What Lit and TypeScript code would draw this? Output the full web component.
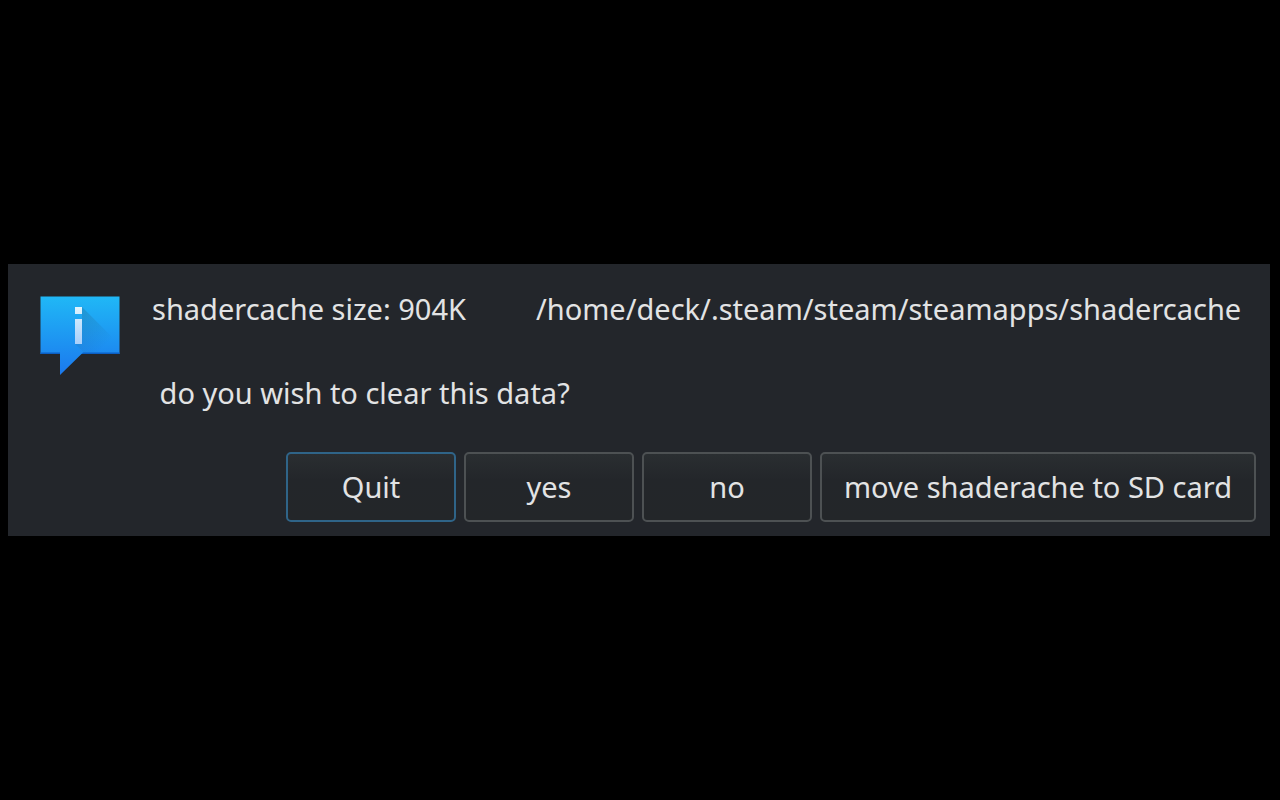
import { LitElement, html, css } from "lit";
import { customElement, property, state } from "lit/decorators.js";

@customElement("info-icon")
class InfoIcon extends LitElement {
  static styles = css`
    :host {
      display: block;
      flex: none;
      width: 80px;
      height: 80px;
    }
    .icon {
      display: block;
      width: 100%;
      height: 100%;
    }
  `;

  render() {
    return html`
      <svg class="icon" viewBox="0 0 80 80" role="img" aria-label="Information">
        <defs>
          <linearGradient id="bubble" x1="0" y1="0" x2="0" y2="80" gradientUnits="userSpaceOnUse">
            <stop offset="0" stop-color="#20b8f6" />
            <stop offset="1" stop-color="#1b78ee" />
          </linearGradient>
          <linearGradient id="shade" x1="38" y1="16" x2="72" y2="50" gradientUnits="userSpaceOnUse">
            <stop offset="0" stop-color="#292c2f" stop-opacity="0.17" />
            <stop offset="0.9" stop-color="#292c2f" stop-opacity="0" />
          </linearGradient>
          <linearGradient id="letter" x1="0" y1="11" x2="0" y2="48" gradientUnits="userSpaceOnUse">
            <stop offset="0" stop-color="#e0f4fe" />
            <stop offset="1" stop-color="#a9cffa" />
          </linearGradient>
        </defs>
        <path fill="url(#bubble)" d="M0.500 0.500H79.500V58H41.500L20 79V58H0.500Z" />
        <path fill="#0b5fc4" d="M0.500 56.500H20V58H0.500ZM43 56.500H79.500V58H41.500Z" />
        <path fill="url(#shade)" d="M42 11L79.500 48.500V56.500H44L35 48H42V22H42Z" />
        <path fill="url(#letter)" d="M35 11h7v7h-7ZM35 23h7v25h-7Z" />
      </svg>
    `;
  }
}

@customElement("dialog-button")
class DialogButton extends LitElement {
  @property() label = "";
  @property({ type: Boolean }) active = false;

  static styles = css`
    :host {
      display: block;
    }
    .button {
      display: block;
      box-sizing: border-box;
      min-width: 170px;
      height: 70px;
      margin: 0;
      padding: 0 22px;
      border: 2px solid #4d5153;
      border-radius: 5px;
      background: linear-gradient(#2a2e31, #23262a 40%, #232629);
      color: #e2e3e4;
      font: inherit;
      white-space: nowrap;
      outline: none;
    }
    .active,
    .button:focus-visible {
      border-color: #2f6488;
    }
  `;

  render() {
    return html`
      <button class="button ${this.active ? "active" : ""}" type="button">${this.label}</button>
    `;
  }
}

@customElement("app-root")
class AppRoot extends LitElement {
  @state() private actions = ["Quit", "yes", "no", "move shaderache to SD card"];

  static styles = css`
    :host {
      display: flex;
      flex-direction: column;
      justify-content: center;
      box-sizing: border-box;
      min-height: 100vh;
      padding: 0 10px 0 8px;
      background: #000;
      color: #e2e3e4;
      font: 29px/42px "Noto Sans", sans-serif;
    }
    .dialog {
      padding: 24px 14px 14px 32px;
      background: #23262b;
    }
    .content {
      display: flex;
      gap: 32px;
    }
    info-icon {
      margin-top: 8px;
    }
    .message {
      white-space: pre;
    }
    .line {
      margin: 0;
      min-height: 42px;
    }
    .summary {
      display: flex;
      gap: 70px;
    }
    .actions {
      display: flex;
      justify-content: flex-end;
      gap: 8px;
      margin-top: 38px;
    }
  `;

  render() {
    return html`
      <section class="dialog" role="dialog" aria-label="Shader cache">
        <div class="content">
          <info-icon></info-icon>
          <div class="message"><p class="line summary"><span>shadercache size: 904K</span><span>/home/deck/.steam/steam/steamapps/shadercache</span></p><p class="line"></p><p class="line"> do you wish to clear this data?</p></div>
        </div>
        <div class="actions">
          ${this.actions.map(
            (label, i) => html`<dialog-button .label=${label} .active=${i === 0}></dialog-button>`
          )}
        </div>
      </section>
    `;
  }
}
